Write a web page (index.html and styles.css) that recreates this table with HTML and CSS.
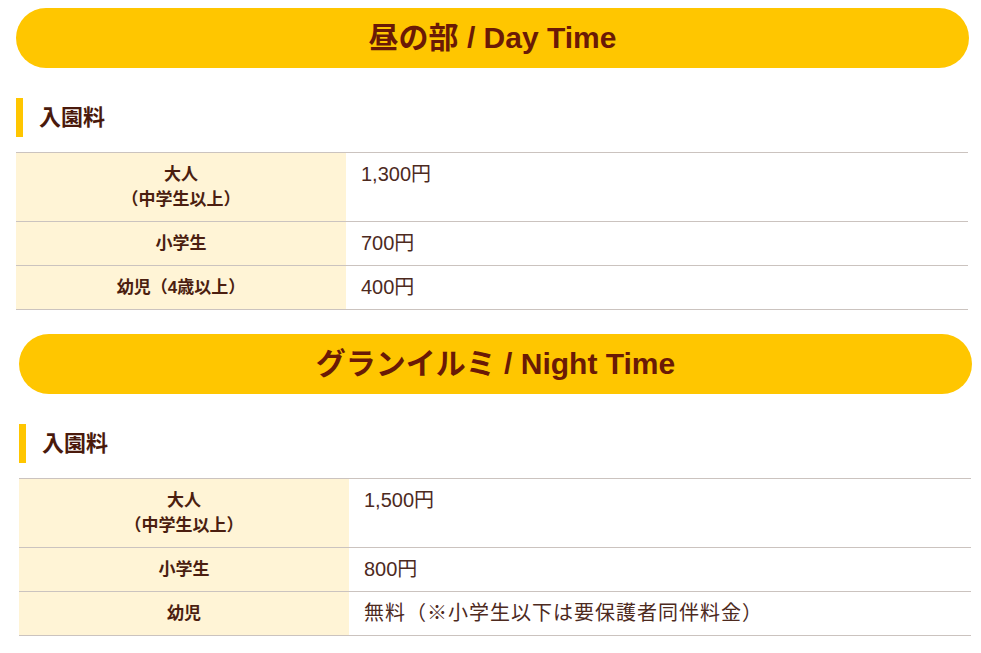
FILE: index.html
```html
<!DOCTYPE html>
<html lang="ja">
<head>
    <meta charset="UTF-8">
    <meta name="viewport" content="width=device-width, initial-scale=1.0">
    <title>料金案内</title>
    <link rel="stylesheet" href="styles.css">
</head>
<body>

    <div class="container">

        <!-- 昼の部 -->
        <section class="price-section">
            <h2 class="banner">昼の部 / Day Time</h2>
            <h3 class="sub-title">入園料</h3>
            <table class="price-table">
                <tr>
                    <th>大人<br>（中学生以上）</th>
                    <td>1,300円</td>
                </tr>
                <tr>
                    <th>小学生</th>
                    <td>700円</td>
                </tr>
                <tr>
                    <th>幼児（4歳以上）</th>
                    <td>400円</td>
                </tr>
            </table>
        </section>

        <!-- グランイルミ -->
        <section class="price-section price-section--night">
            <h2 class="banner">グランイルミ / Night Time</h2>
            <h3 class="sub-title">入園料</h3>
            <table class="price-table">
                <tr>
                    <th>大人<br>（中学生以上）</th>
                    <td>1,500円</td>
                </tr>
                <tr>
                    <th>小学生</th>
                    <td>800円</td>
                </tr>
                <tr>
                    <th>幼児</th>
                    <td><span class="note">無料（※小学生以下は要保護者同伴料金）</span></td>
                </tr>
            </table>
        </section>

    </div>

</body>
</html>
```
FILE: styles.css
```css
* { box-sizing: border-box; }
body { margin: 8px 0 0 16px; font-family: "Liberation Sans", "Noto Sans CJK JP", sans-serif; color: #4d2a1e; background: #fff; }

.price-section { width: 953px; margin-bottom: 24px; }
.price-section--night { margin-left: 3px; }

.banner { margin: 0 0 30px; height: 60px; line-height: 60px; border-radius: 30px; background-color: #ffc600; color: #6a1a06; font-size: 30px; font-weight: bold; text-align: center; }

.sub-title { margin: 0 0 15px; height: 39px; line-height: 39px; padding-left: 16px; border-left: 7px solid #ffc600; color: #4a1a0c; font-size: 22px; font-weight: bold; }

.price-table { width: 952px; border-collapse: collapse; border-top: 1px solid #cbc3bf; }
.price-table tr { border-bottom: 1px solid #cbc3bf; }
.price-table th { width: 330px; padding: 9px 15px; background-color: #fff4d6; color: #4b1e10; font-size: 17px; line-height: 25px; font-weight: bold; text-align: center; vertical-align: middle; }
.price-table td { padding: 9px 15px; font-size: 20px; line-height: 25px; text-align: left; vertical-align: top; }
.note { letter-spacing: 1px; }
```
